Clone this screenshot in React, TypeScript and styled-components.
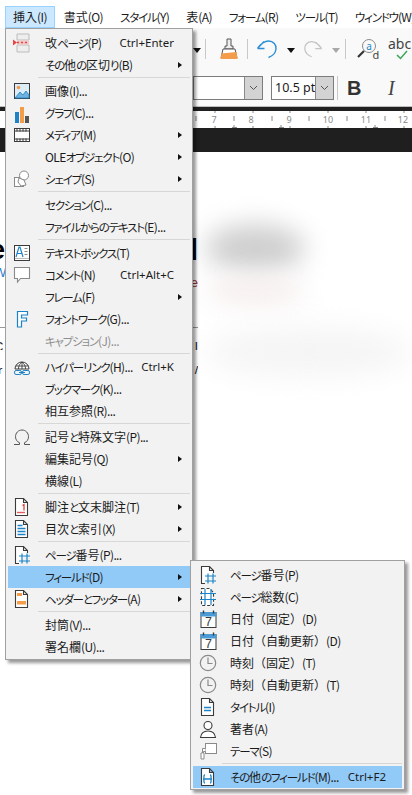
import React from "react";
import styled, { createGlobalStyle } from "styled-components";

const Global = createGlobalStyle`
  html, body { margin: 0; padding: 0; background: #fff; }
  body { font-family: "Noto Sans CJK JP", "Noto Sans", sans-serif; }
`;

const Page = styled.div`
  position: relative;
  width: 412px;
  height: 795px;
  overflow: hidden;
  background: #fff;
  color: #1b1b1b;
  font-size: 12px;
`;

const KanaRun = styled.span`
  font-feature-settings: "palt";
  font-size: 11.5px;
  letter-spacing: -1.2px;
`;

const LatinRun = styled.span`
  letter-spacing: -0.6px;
`;

const MenuBar = styled.div`
  display: flex;
  align-items: flex-end;
  gap: 1px;
  height: 28px;
  padding-left: 5px;
  background: #fff;
  white-space: nowrap;
`;

const MenuTab = styled.div<{ $active?: boolean }>`
  box-sizing: border-box;
  height: 22px;
  line-height: 19px;
  padding: 0 7px;
  border: 1px solid ${(p) => (p.$active ? "#99d1ff" : "transparent")};
  background: ${(p) => (p.$active ? "#cce8ff" : "transparent")};
`;

const ToolRow = styled.div<{ $h: number }>`
  display: flex;
  align-items: center;
  height: ${(p) => p.$h}px;
  background: #f9f9f9;
  overflow: hidden;
`;

const ToolSlot = styled.div<{ $w: number; $ml?: number }>`
  flex: 0 0 ${(p) => p.$w}px;
  margin-left: ${(p) => p.$ml ?? 0}px;
  display: flex;
  align-items: center;
  justify-content: center;
`;

const ToolSep = styled.div<{ $ml: number; $h?: number }>`
  flex: 0 0 1px;
  height: ${(p) => p.$h ?? 20}px;
  margin-left: ${(p) => p.$ml}px;
  background: #c8c8c8;
`;

const DropArrow = styled.div<{ $off?: boolean }>`
  width: 0;
  height: 0;
  margin-top: 2px;
  border-left: 4px solid transparent;
  border-right: 4px solid transparent;
  border-top: 5px solid ${(p) => (p.$off ? "#a8a8a8" : "#111")};
`;

const Combo = styled.div<{ $w: number; $ml: number }>`
  box-sizing: border-box;
  display: flex;
  flex: 0 0 ${(p) => p.$w}px;
  height: 24px;
  margin-left: ${(p) => p.$ml}px;
  background: #fff;
  border: 1px solid #7c7c7c;
`;

const ComboText = styled.div`
  flex: 1;
  padding-left: 3px;
  line-height: 22px;
  font-size: 12.5px;
  font-family: "Noto Sans", sans-serif;
  white-space: nowrap;
`;

const ComboButton = styled.div`
  flex: 0 0 17px;
  display: flex;
  align-items: center;
  justify-content: center;
  background: #d3d3d3;
  border-left: 1px solid #8a8a8a;
`;

const BoldMark = styled.div`
  flex: 0 0 24px;
  margin-left: 4px;
  text-align: center;
  font: bold 20px "Liberation Sans", sans-serif;
  color: #333;
`;

const ItalicMark = styled.div`
  flex: 0 0 24px;
  margin-left: 13px;
  text-align: center;
  font: italic 20px "Liberation Serif", serif;
  color: #444;
`;

const AbcTool = styled.div`
  position: relative;
  flex: 0 0 24px;
  margin-left: 7px;
  height: 30px;
  font: 14px "Noto Sans", sans-serif;
  line-height: 20px;
  color: #444;
`;

const AbcCheck = styled.svg`
  position: absolute;
  left: 8px;
  top: 16px;
`;

const RulerTop = styled.div`
  box-sizing: border-box;
  height: 5px;
  background: #202020;
  border-top: 1px solid #bdbdbd;
`;

const RulerSvg = styled.svg`
  display: block;
  background: #fff;
`;

const DarkBand = styled.div`
  height: 24px;
  background: #1f1f1f;
`;

const Doc = styled.div`
  position: relative;
  height: 643px;
  padding-top: 85px;
  box-sizing: border-box;
  background: #fff;
  overflow: hidden;
`;

const DocRow = styled.div<{ $h: number; $rule?: boolean }>`
  position: relative;
  z-index: 1;
  display: flex;
  justify-content: space-between;
  width: 198px;
  height: ${(p) => p.$h}px;
  border-top: ${(p) => (p.$rule ? "1px solid #9a9a9a" : "0")};
  overflow: hidden;
`;

const DocGlyph = styled.span<{ $size: number; $ml: number; $mt: number; $color: string; $bold?: boolean }>`
  display: block;
  margin-left: ${(p) => p.$ml}px;
  margin-top: ${(p) => p.$mt}px;
  font-family: "Liberation Sans", sans-serif;
  font-size: ${(p) => p.$size}px;
  font-weight: ${(p) => (p.$bold ? 700 : 400)};
  line-height: 1;
  color: ${(p) => p.$color};
  white-space: nowrap;
`;

const Blob = styled.div<{ $l: number; $t: number; $w: number; $h: number; $c: string; $b: number }>`
  position: absolute;
  left: ${(p) => p.$l}px;
  top: ${(p) => p.$t}px;
  width: ${(p) => p.$w}px;
  height: ${(p) => p.$h}px;
  background: ${(p) => p.$c};
  border-radius: 50%;
  filter: blur(${(p) => p.$b}px);
`;

const MenuPanel = styled.div<{ $l: number; $t: number; $w: number; $z: number }>`
  position: absolute;
  left: ${(p) => p.$l}px;
  top: ${(p) => p.$t}px;
  z-index: ${(p) => p.$z};
  box-sizing: border-box;
  width: ${(p) => p.$w}px;
  padding: 3px 2px 1px;
  background: #f2f2f2;
  border: 1px solid #a0a0a0;
  box-shadow: 3px 3px 3px rgba(0, 0, 0, 0.4);
`;

const Row = styled.div<{ $hot?: boolean; $off?: boolean; $iconW: number; $gap: number }>`
  display: grid;
  grid-template-columns: ${(p) => p.$iconW}px 1fr auto 16px;
  align-items: center;
  height: 22px;
  background: ${(p) => (p.$hot ? "#91c9f7" : "transparent")};
  color: ${(p) => (p.$off ? "#8e8e8e" : "#1b1b1b")};
  white-space: nowrap;
  --label-gap: ${(p) => p.$gap}px;
`;

const RowIcon = styled.div`
  display: flex;
  justify-content: center;
  align-items: center;
`;

const RowLabel = styled.div`
  margin-left: var(--label-gap);
  line-height: 20px;
  padding-bottom: 1px;
`;

const RowKey = styled.div`
  line-height: 20px;
  padding-bottom: 1px;
  font-family: "Noto Sans", sans-serif;
  font-size: 11.5px;
`;

const RowArrow = styled.div`
  width: 0;
  height: 0;
  margin-left: 4px;
  border-top: 3.5px solid transparent;
  border-bottom: 3.5px solid transparent;
  border-left: 4px solid #111;
`;

const RowSep = styled.div<{ $ml: number }>`
  height: 1px;
  margin: 1px 0 2px ${(p) => p.$ml}px;
  background: #d7d7d7;
`;

const B = "#1c84c6";
const D = "#3b3b3b";
const G = "#8a8a8a";
const O = "#f39c4a";

const Sheet = () => <path d="M3.5 1.5h8l4 4v13h-12z M11.5 1.5v4h4" fill="#fff" stroke={D} strokeWidth="1.1" />;

const icons: Record<string, React.ReactNode> = {
  pagebreak: (
    <>
      <path d="M5 1h12v6H5zM5 12h12v7H5z" fill="#eee" stroke="#bcbcbc" />
      <path d="M5 7.5h12v4H5z" fill="#f6c9c9" />
      <path d="M1 6.5l4 3-4 3z" fill="#e54848" />
      <path d="M5 9.5h12" stroke="#e54848" strokeDasharray="2 2" strokeWidth="1.4" />
    </>
  ),
  image: (
    <>
      <rect x="2.5" y="2.5" width="15" height="15" fill="#dcecf8" stroke={D} />
      <circle cx="6.5" cy="6.5" r="1.8" fill={O} />
      <path d="M3 17l5-6 3 3 3-4 3 4v3z" fill="#6eb0e0" stroke={B} strokeWidth=".8" />
    </>
  ),
  chart: (
    <>
      <rect x="3" y="9" width="4" height="11" fill={B} />
      <rect x="8" y="4" width="4" height="16" fill={O} />
      <rect x="13" y="13" width="4" height="7" fill="#555" />
    </>
  ),
  media: (
    <>
      <rect x="2.5" y="3.5" width="15" height="13" fill="#fff" stroke={D} />
      <path d="M3 6h14M3 14h14" stroke={D} />
      <path d="M5 3.5v3M8 3.5v3M11 3.5v3M14 3.5v3M5 13.5v3M8 13.5v3M11 13.5v3M14 13.5v3" stroke={D} />
    </>
  ),
  shape: (
    <>
      <rect x="2.5" y="8.5" width="9" height="9" fill="#fff" stroke={G} />
      <circle cx="12" cy="6.5" r="4.5" fill="#fff" stroke={G} />
      <path d="M7 9l5 2 2 5-5 1-3-4z" fill="#fff" stroke={G} />
    </>
  ),
  textbox: (
    <>
      <rect x="2.5" y="2.5" width="15" height="15" fill="#fff" stroke={D} />
      <path d="M4 14l3-10h1l3 10M5.2 10.5h4.8" fill="none" stroke={B} strokeWidth="1.2" />
      <path d="M12.5 5.5h3M12.5 8.5h3M12.5 11.5h3" stroke={G} />
      <path d="M3 15.5h14" stroke="#bbb" />
    </>
  ),
  comment: <path d="M2.5 2.5h15v11h-9l-3 3.5v-3.5h-3z" fill="#fff" stroke={G} strokeWidth="1.1" />,
  fontwork: <path d="M5.5 2.5h10v3.5h-6v3h5v3h-5v6h-4z" fill="#fff" stroke={B} strokeWidth="1.2" />,
  link: (
    <>
      <path d="M3 12a7 7 0 0 1 14 0z" fill="#fff" stroke={D} />
      <path d="M10 5v7M6.5 12c0-3 1-5 3.5-7 2.5 2 3.5 4 3.5 7M3.5 9h13" fill="none" stroke={D} strokeWidth=".9" />
      <rect x="2.5" y="13.5" width="7" height="4" rx="1.6" fill="none" stroke={B} />
      <rect x="10.5" y="13.5" width="7" height="4" rx="1.6" fill="none" stroke={B} />
      <path d="M7 15.5h6" stroke={B} />
    </>
  ),
  omega: (
    <path
      d="M2 17.5h5.5v-1.8c-2.5-1-4-3.2-4-6C3.5 6 6.3 3 10 3s6.5 3 6.5 6.7c0 2.8-1.5 5-4 6v1.8H18"
      fill="none"
      stroke="#555"
      strokeWidth="1"
    />
  ),
  footnote: (
    <>
      <Sheet />
      <path d="M5 15.5h8" stroke="#e35d5d" strokeWidth="1.4" />
      <path d="M10.5 8.5l1.5-1v6" fill="none" stroke="#d33" strokeWidth="1.2" />
    </>
  ),
  toc: (
    <>
      <Sheet />
      <path d="M5.5 6.5h5M5.5 9.5h8M5.5 12.5h8M5.5 15.5h8" stroke={B} strokeWidth="1.3" />
    </>
  ),
  pagenum: (
    <>
      <path d="M7 18.5H3.5v-17h8l4 4V8 M11.5 1.5v4h4" fill="#fff" stroke={D} strokeWidth="1.1" />
      <path d="M10 8.5v10M15 8.5v10M7 11h11M7 16h11" stroke={B} strokeWidth="1.2" />
    </>
  ),
  pagetotal: (
    <>
      <path d="M3.5 1.5h8l4 4v13h-12z" fill="#fff" stroke={D} strokeWidth="1.1" strokeDasharray="3 2" />
      <path d="M7 2v16M13 2v16M2 6.5h16M2 12.5h16" stroke={B} strokeWidth="1.2" />
    </>
  ),
  header: (
    <>
      <Sheet />
      <rect x="5" y="4" width="5" height="3" fill={O} />
      <rect x="5" y="12" width="9" height="3.5" fill={O} />
    </>
  ),
  cal: (
    <>
      <rect x="3" y="3.5" width="15" height="15" fill="#fff" stroke={D} />
      <rect x="2.5" y="3" width="16" height="4.5" fill="#4a9bd6" />
      <path d="M5.5 1.5v3M15.5 1.5v3" stroke={D} strokeWidth="1.4" />
      <text x="10.5" y="17.3" textAnchor="middle" fontSize="12.5" fontFamily="Liberation Sans" fill={D}>7</text>
    </>
  ),
  clock: (
    <>
      <circle cx="10" cy="10" r="7.7" fill="none" stroke={G} strokeWidth="1.2" />
      <path d="M10 4.5V10.5H14.5" fill="none" stroke={G} strokeWidth="1.2" />
    </>
  ),
  title: (
    <>
      <Sheet />
      <path d="M6 10.5h7M6 13.5h7" stroke={B} strokeWidth="1.4" />
    </>
  ),
  author: (
    <path
      d="M10 2.5a4 4 0 0 1 0 8a4 4 0 0 1 0-8zM2.5 18.5c.5-4 3-6.5 7.500-6.500s7 2.500 7.500 6.500z"
      fill="#fff"
      stroke={D}
      strokeWidth="1.1"
    />
  ),
  theme: (
    <>
      <rect x="7.5" y="2.5" width="11" height="10" fill="#fff" stroke={G} />
      <path d="M7.5 7.5H4.5v4.5h-1.5v6h3v-6H5.5v-1.500H7.5" fill="#fff" stroke={G} />
    </>
  ),
  more: (
    <>
      <Sheet />
      <path d="M7 8c-1.5 0-1 2-1 3s-.5 1-1 1c.5 0 1 0 1 1s-.5 3 1 3M12 8c1.5 0 1 2 1 3s.5 1 1 1c-.5 0-1 0-1 1s.5 3-1 3M6.5 12h6" fill="none" stroke={B} strokeWidth="1.3" />
    </>
  ),
};

const MenuIcon = ({ name }: { name: string }) => (
  <svg width="20" height="20" viewBox="0 0 20 20">
    {icons[name]}
  </svg>
);

const Jp = ({ s }: { s: string }) => (
  <>
    {s
      .split(/([\u3040-\u30ff]+|[\x20-\x7e]+)/)
      .filter(Boolean)
      .map((part, n) =>
        /[\u3040-\u30ff]/.test(part) ? (
          <KanaRun key={n}>{part}</KanaRun>
        ) : /[\x20-\x7e]/.test(part) ? (
          <LatinRun key={n}>{part}</LatinRun>
        ) : (
          part
        )
      )}
  </>
);

type Entry =
  | "-"
  | { t: string; i?: string; k?: string; sub?: boolean; hot?: boolean; off?: boolean };

const mainItems: Entry[] = [
  { t: "改ページ(P)", i: "pagebreak", k: "Ctrl+Enter" },
  { t: "その他の区切り(B)", sub: true },
  "-",
  { t: "画像(I)...", i: "image" },
  { t: "グラフ(C)...", i: "chart" },
  { t: "メディア(M)", i: "media", sub: true },
  { t: "OLEオブジェクト(O)", sub: true },
  { t: "シェイプ(S)", i: "shape", sub: true },
  "-",
  { t: "セクション(C)..." },
  { t: "ファイルからのテキスト(E)..." },
  "-",
  { t: "テキストボックス(T)", i: "textbox" },
  { t: "コメント(N)", i: "comment", k: "Ctrl+Alt+C" },
  { t: "フレーム(F)", sub: true },
  { t: "フォントワーク(G)...", i: "fontwork" },
  { t: "キャプション(J)...", off: true },
  "-",
  { t: "ハイパーリンク(H)...", i: "link", k: "Ctrl+K" },
  { t: "ブックマーク(K)..." },
  { t: "相互参照(R)..." },
  "-",
  { t: "記号と特殊文字(P)...", i: "omega" },
  { t: "編集記号(Q)", sub: true },
  { t: "横線(L)" },
  "-",
  { t: "脚注と文末脚注(T)", i: "footnote", sub: true },
  { t: "目次と索引(X)", i: "toc", sub: true },
  "-",
  { t: "ページ番号(P)...", i: "pagenum" },
  { t: "フィールド(D)", sub: true, hot: true },
  { t: "ヘッダーとフッター(A)", i: "header", sub: true },
  "-",
  { t: "封筒(V)..." },
  { t: "署名欄(U)..." },
];

const fieldItems: Entry[] = [
  { t: "ページ番号(P)", i: "pagenum" },
  { t: "ページ総数(C)", i: "pagetotal" },
  { t: "日付（固定）(D)", i: "cal" },
  { t: "日付（自動更新）(D)", i: "cal" },
  { t: "時刻（固定）(T)", i: "clock" },
  { t: "時刻（自動更新）(T)", i: "clock" },
  { t: "タイトル(I)", i: "title" },
  { t: "著者(A)", i: "author" },
  { t: "テーマ(S)", i: "theme" },
  "-",
  { t: "その他のフィールド(M)...", i: "more", k: "Ctrl+F2", hot: true },
];

const Menu = ({
  items, l, t, w, z, iconW, gap, sepMl,
}: { items: Entry[]; l: number; t: number; w: number; z: number; iconW: number; gap: number; sepMl: number }) => (
  <MenuPanel $l={l} $t={t} $w={w} $z={z}>
    {items.map((it, n) =>
      it === "-" ? (
        <RowSep key={n} $ml={sepMl} />
      ) : (
        <Row key={n} $hot={it.hot} $off={it.off} $iconW={iconW} $gap={gap}>
          <RowIcon>{it.i && <MenuIcon name={it.i} />}</RowIcon>
          <RowLabel><Jp s={it.t} /></RowLabel>
          <RowKey>{it.k}</RowKey>
          <div>{it.sub && <RowArrow />}</div>
        </Row>
      )
    )}
  </MenuPanel>
);

const Chevron = () => (
  <svg width="9" height="6" viewBox="0 0 9 6">
    <path d="M1 1l3.5 3.5L8 1" fill="none" stroke="#555" strokeWidth="1" />
  </svg>
);

const rulerNums = [
  [214, "7"], [251, "8"], [289, "9"], [328, "10"], [366, "11"], [403, "12"],
] as const;

const Ruler = () => (
  <RulerSvg width="412" height="17" viewBox="0 0 412 17">
    {[215, 253, 290, 328, 366, 404].map((x) => (
      <path key={x} d={`M${x} 0v2M${x} 15v2`} stroke="#888" />
    ))}
    {[196, 234, 272, 309, 347, 385].map((x) => (
      <path key={x} d={`M${x} 5v5`} stroke="#888" />
    ))}
    {[234, 281, 375].map((x) => (
      <path key={x} d={`M${x - 2} 16.5h5M${x} 14v3`} stroke="#888" />
    ))}
    {rulerNums.map(([x, s]) => (
      <text key={x} x={x} y={12} textAnchor="middle" fontSize="9" fontFamily="Noto Sans" fill="#8a8a8a">
        {s}
      </text>
    ))}
  </RulerSvg>
);

export default function App() {
  return (
    <Page>
      <Global />
      <MenuBar>
        <MenuTab $active><Jp s="挿入(I)" /></MenuTab>
        <MenuTab><Jp s="書式(O)" /></MenuTab>
        <MenuTab><Jp s="スタイル(Y)" /></MenuTab>
        <MenuTab><Jp s="表(A)" /></MenuTab>
        <MenuTab><Jp s="フォーム(R)" /></MenuTab>
        <MenuTab><Jp s="ツール(T)" /></MenuTab>
        <MenuTab><Jp s="ウィンドウ(W)" /></MenuTab>
      </MenuBar>

      <ToolRow $h={42}>
        <ToolSlot $w={191} />
        <ToolSlot $w={11}><DropArrow /></ToolSlot>
        <ToolSep $ml={3} />
        <ToolSlot $w={30} $ml={8}>
          <svg width="18" height="22" viewBox="0 0 18 22">
            <path d="M7 1h4v7h2v3H5V8h2z" fill="#eee" stroke="#555" />
            <path d="M3 11h12l2 9H1z" fill="#fff" stroke="#555" />
            <path d="M1.5 15.5l15-1.5 1 7H.5z" fill={O} />
          </svg>
        </ToolSlot>
        <ToolSep $ml={3} />
        <ToolSlot $w={26} $ml={6}>
          <svg width="22" height="20" viewBox="0 0 22 20">
            <path d="M1.5 9.5L8 2.5 M1.5 9.5h7 M1.5 9.5C4 6 8 2 12.5 2 17.5 2 20.5 6 20 10c-.4 4-3.5 7-7.5 8.5" fill="none" stroke="#2a8fd6" strokeWidth="1.4" />
          </svg>
        </ToolSlot>
        <ToolSlot $w={12} $ml={5}><DropArrow /></ToolSlot>
        <ToolSlot $w={26} $ml={3}>
          <svg width="20" height="20" viewBox="0 0 22 20">
            <path d="M20.5 9.5L14 2.5 M20.5 9.5h-7 M20.5 9.5C18 6 14 2 9.5 2 4.5 2 1.5 6 2 10c.4 4 3.5 7 7.5 8.5" fill="none" stroke="#c4c4c4" strokeWidth="1.4" />
          </svg>
        </ToolSlot>
        <ToolSlot $w={12} $ml={4}><DropArrow $off /></ToolSlot>
        <ToolSep $ml={3} />
        <ToolSlot $w={26} $ml={9}>
          <svg width="24" height="22" viewBox="0 0 24 22">
            <circle cx="13" cy="8" r="6.5" fill="none" stroke="#8a8a8a" />
            <path d="M8 13l-6 6" stroke="#333" strokeWidth="2.2" />
            <text x="13" y="11.5" textAnchor="middle" fontSize="10" fontFamily="Noto Sans" fill="#1c84c6">a</text>
            <text x="20" y="20.5" textAnchor="middle" fontSize="11" fontFamily="Noto Sans" fill="#444">d</text>
          </svg>
        </ToolSlot>
        <AbcTool>
          abc
          <AbcCheck width="12" height="10" viewBox="0 0 12 10">
            <path d="M1 5l3.5 3.5L11 1" fill="none" stroke="#3aa655" strokeWidth="1.5" />
          </AbcCheck>
        </AbcTool>
      </ToolRow>

      <ToolRow $h={36}>
        <Combo $w={70} $ml={193}>
          <ComboText />
          <ComboButton><Chevron /></ComboButton>
        </Combo>
        <Combo $w={59} $ml={8}>
          <ComboText>10.5 pt</ComboText>
          <ComboButton><Chevron /></ComboButton>
        </Combo>
        <ToolSep $ml={3} $h={24} />
        <BoldMark>B</BoldMark>
        <ItalicMark>I</ItalicMark>
      </ToolRow>

      <RulerTop />
      <Ruler />
      <DarkBand />

      <Doc>
        <Blob $l={205} $t={72} $w={100} $h={48} $c="#cfcfcf" $b={13} />
        <Blob $l={205} $t={125} $w={100} $h={28} $c="#f6eeee" $b={12} />
        <Blob $l={205} $t={175} $w={207} $h={50} $c="#f5f5f5" $b={14} />
        <DocRow $h={26}>
          <DocGlyph $size={27} $ml={-10} $mt={0} $color="#000" $bold>e</DocGlyph>
          <DocGlyph $size={30} $ml={0} $mt={-2} $color="#000" $bold>l</DocGlyph>
        </DocRow>
        <DocRow $h={64}>
          <DocGlyph $size={13} $ml={-6} $mt={3} $color="#2a7fd0">W</DocGlyph>
          <DocGlyph $size={13} $ml={0} $mt={13} $color="#a03030">e</DocGlyph>
        </DocRow>
        <DocRow $h={22} $rule>
          <DocGlyph $size={13} $ml={-6} $mt={12} $color="#222">C</DocGlyph>
          <DocGlyph $size={13} $ml={0} $mt={12} $color="#222">I</DocGlyph>
        </DocRow>
        <DocRow $h={24}>
          <DocGlyph $size={13} $ml={-2} $mt={14} $color="#222">r</DocGlyph>
          <DocGlyph $size={13} $ml={0} $mt={14} $color="#222">/</DocGlyph>
        </DocRow>
      </Doc>

      <Menu items={mainItems} l={5} t={28} w={188} z={2} iconW={28} gap={9} sepMl={30} />
      <Menu items={fieldItems} l={190} t={560} w={215} z={3} iconW={30} gap={7} sepMl={29} />
    </Page>
  );
}
